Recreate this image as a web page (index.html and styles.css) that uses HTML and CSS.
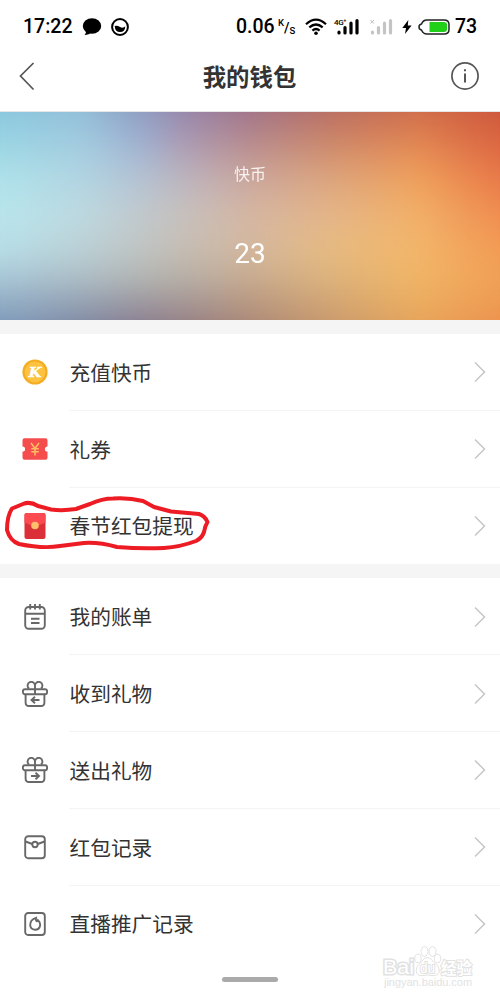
FILE: index.html
```html
<!DOCTYPE html>
<html lang="zh-CN">
<head>
<meta charset="utf-8">
<title>我的钱包</title>
<link rel="stylesheet" href="styles.css">
</head>
<body>
<main class="screen">
  <header class="status">
    <span class="time">17:22</span>
    <svg class="chat" width="20" height="18" viewBox="0 0 20 18"><ellipse cx="10" cy="8" rx="9.2" ry="7.8"/><path d="M4 12Q4.500 15 2.500 17Q7 17 10 14z"/></svg>
    <svg class="face" width="18" height="18" viewBox="0 0 18 18"><circle cx="9" cy="9" r="7.9" fill="none" stroke="#000" stroke-width="2"/><path d="M3.7 8Q6 7 9 9Q12 10.5 14.3 8.5Q14 14 9 14Q4 14 3.7 8z"/></svg>
    <span class="rate">0.06</span>
    <span class="unit"><span class="unit-k">K</span><span class="unit-slash">/</span><span class="unit-s">S</span></span>
    <svg class="wifi" width="22" height="18" viewBox="0 0 22 18"><g fill="none" stroke="#000" stroke-width="2.2"><path d="M1 6.2Q11-3 21 6.2M4.3 9.4Q11 3.6 17.7 9.4M7.4 12.6Q11 9.4 14.6 12.6"/></g><circle cx="11" cy="15.3" r="1.8"/></svg>
    <svg class="signal" width="26" height="18" viewBox="0 0 26 18"><text x="0" y="7">4G⁺</text><g stroke="#000" stroke-width="3.2" stroke-linecap="round"><path d="M5 14.2V15M11 9.6V15M17 5.2V15M23 2.5V15"/></g></svg>
    <svg class="signal-off" width="24" height="18" viewBox="0 0 24 18"><path d="M1.500 2L5 5.500M5 2L1.500 5.500" stroke="#bbb"/><g stroke="#c4c4c4" stroke-width="3.200" stroke-linecap="round"><path d="M3.500 14.200V15M9.500 9.600V15M15.500 5.200V15M21.500 2.500V15"/></g></svg>
    <svg class="bolt" width="10" height="14" viewBox="0 0 10 14"><path d="M6.3 0L.3 8H4L3 14L9.6 5.6H5.8z"/></svg>
    <svg class="battery" width="32" height="16" viewBox="0 0 32 16"><path d="M3.500 5Q5 1 9 1H26Q31 1 31 5.500V10.500Q31 15 26 15H9Q5 15 3.500 11Q1 10.500 1 8T3.500 5z" fill="#fff" stroke="#222" stroke-width="1.500"/><path d="M11.500 3H26Q29 3 29 6V10Q29 13 26 13H11.500z" fill="#20cf18"/></svg>
    <span class="level">73</span>
  </header>

  <nav class="nav">
    <svg class="back" width="18" height="30" viewBox="0 0 18 30"><path d="M15.500 2L2.500 15L15.500 28.500" fill="none" stroke="#555" stroke-width="1.700"/></svg>
    <h1 class="title">我的钱包</h1>
    <svg class="info" width="30" height="30" viewBox="0 0 30 30"><circle cx="15" cy="15" r="13.100" fill="none" stroke="#555" stroke-width="1.700"/><path d="M15 12.500V21.500M15 8.200V10.200" stroke="#555" stroke-width="2"/></svg>
  </nav>

  <section class="balance">
    <div class="tone tone-1"></div>
    <div class="tone tone-2"></div>
    <div class="tone tone-3"></div>
    <div class="tone tone-4"></div>
    <div class="tone tone-5"></div>
    <div class="tone tone-6"></div>
    <div class="soften"></div>
    <div class="coin-label">快币</div>
    <div class="coin-value">23</div>
  </section>

  <section class="group">
    <div class="row">
      <svg class="icon" width="26" height="26" viewBox="0 0 26 26"><circle cx="13" cy="13" r="12.600" fill="#f3ad24"/><circle cx="13" cy="13" r="10.400" fill="#fdc23f"/><text class="coin-k" x="13" y="17.700" textLength="12.500" lengthAdjust="spacingAndGlyphs">K</text></svg>
      <span class="label">充值快币</span>
      <svg class="arrow" width="14" height="22" viewBox="0 0 14 22"><path d="M2 1.500L11.500 11L2 20.500"/></svg>
    </div>
    <div class="row">
      <svg class="icon" width="26" height="26" viewBox="0 0 26 26"><path d="M2.500 2.300H23.500Q25.500 2.300 25.500 4.300V10.400A2.600 2.600 0 0 0 25.500 15.600V21.700Q25.500 23.700 23.500 23.700H2.500Q.5 23.700 .5 21.700V15.600A2.600 2.600 0 0 0 .5 10.400V4.300Q.5 2.300 2.500 2.300z" fill="#f54d4d"/><path d="M9 7L13 12.500L17 7M13 12.500V19.500M9.300 12.700H16.700M9.300 15.700H16.700" fill="none" stroke="#fdbe62" stroke-width="1.500"/></svg>
      <span class="label">礼券</span>
      <svg class="arrow" width="14" height="22" viewBox="0 0 14 22"><path d="M2 1.500L11.500 11L2 20.500"/></svg>
    </div>
    <div class="row">
      <svg class="icon" width="26" height="26" viewBox="0 0 26 26"><rect x="2.500" y="0" width="21" height="26" rx="2" fill="#dc3038"/><path d="M4.500 0H21.500Q23.500 0 23.500 2V9.500Q13 15.500 2.500 9.500V2Q2.500 0 4.500 0z" fill="#fb4b51"/><circle cx="13" cy="12.500" r="3.800" fill="#fdbf6b"/></svg>
      <span class="label">春节红包提现</span>
      <svg class="arrow" width="14" height="22" viewBox="0 0 14 22"><path d="M2 1.500L11.500 11L2 20.500"/></svg>
      <svg class="marker" width="214" height="60" viewBox="0 0 214 60"><path d="M12 15.500L23 11Q30 8 38 13L51 16.500Q63 18 76 16L90 11Q102 5.500 113 5.500Q129 4.500 143 8L154 14L171 18.500L199 21Q205 23 207.500 29Q205 33 204 39Q202 45 196 48Q180 54 164 55Q140 56 117 54Q99 49 84 50L60 53Q43 56 19 51Q10 48 7 37Q7 23 12 15.500z"/></svg>
    </div>
  </section>

  <section class="group">
    <div class="row">
      <svg class="icon line" width="26" height="26" viewBox="0 0 26 26"><rect x="3.200" y="3" width="19.600" height="21.800" rx="3.500"/><path d="M3.200 9.700H22.800M8.200 0V5.500M13 0V5.500M17.800 0V5.500M9 14.800H17.500M9 19H17.500"/></svg>
      <span class="label">我的账单</span>
      <svg class="arrow" width="14" height="22" viewBox="0 0 14 22"><path d="M2 1.500L11.500 11L2 20.500"/></svg>
    </div>
    <div class="row">
      <svg class="icon line" width="26" height="26" viewBox="0 0 26 26"><rect x=".9" y="8.200" width="24.200" height="5" rx="2"/><path d="M3.600 13.200V21.500Q3.600 25 7 25H19Q22.400 25 22.400 21.500V13.200M13 8V4.800A3.700 3.700 0 1 0 7 7.500M13 8V4.800A3.700 3.700 0 1 1 19 7.500M13 8V13M17.500 19H9.500M13 15.800L9.500 19L13 22.200"/></svg>
      <span class="label">收到礼物</span>
      <svg class="arrow" width="14" height="22" viewBox="0 0 14 22"><path d="M2 1.500L11.500 11L2 20.500"/></svg>
    </div>
    <div class="row">
      <svg class="icon line" width="26" height="26" viewBox="0 0 26 26"><rect x=".9" y="8.200" width="24.200" height="5" rx="2"/><path d="M3.600 13.200V21.500Q3.600 25 7 25H19Q22.400 25 22.400 21.500V13.200M13 8V4.800A3.700 3.700 0 1 0 7 7.500M13 8V4.800A3.700 3.700 0 1 1 19 7.500M13 8V13M9 19H17M13.500 15.800L17 19L13.500 22.200"/></svg>
      <span class="label">送出礼物</span>
      <svg class="arrow" width="14" height="22" viewBox="0 0 14 22"><path d="M2 1.500L11.500 11L2 20.500"/></svg>
    </div>
    <div class="row">
      <svg class="icon line" width="26" height="26" viewBox="0 0 26 26"><rect x="3.200" y="2.200" width="19.600" height="22" rx="3"/><circle cx="13" cy="10.500" r="2.700"/><path d="M3.500 7.500L10.300 10M22.500 7.500L15.700 10"/></svg>
      <span class="label">红包记录</span>
      <svg class="arrow" width="14" height="22" viewBox="0 0 14 22"><path d="M2 1.500L11.500 11L2 20.500"/></svg>
    </div>
    <div class="row">
      <svg class="icon line" width="26" height="26" viewBox="0 0 26 26"><rect x="3.200" y="2" width="19.600" height="22" rx="3"/><path d="M14 6.800Q13.500 9.600 14.800 10.200Q15.800 10.300 16 9.300Q18.200 11.300 18.200 14Q17.500 18.700 13 18.700Q8.300 18.300 8.200 14Q8.200 8.500 14 6.800z"/></svg>
      <span class="label">直播推广记录</span>
      <svg class="arrow" width="14" height="22" viewBox="0 0 14 22"><path d="M2 1.500L11.500 11L2 20.500"/></svg>
    </div>
  </section>

  <div class="home-bar"></div>
  <svg class="watermark" width="100" height="48" viewBox="0 0 100 48">
    <text class="wm-latin" x="3" y="29" textLength="31" lengthAdjust="spacingAndGlyphs">Bai</text>
    <g class="paw"><ellipse cx="38" cy="13.500" rx="3.200" ry="4.300"/><ellipse cx="44.500" cy="6.500" rx="3.500" ry="5"/><ellipse cx="52.500" cy="6.500" rx="3.500" ry="5"/><ellipse cx="57.500" cy="13.500" rx="3.200" ry="4.300"/><path d="M47.500 12.500Q51 12.500 53.500 17Q59.500 21 59.500 26Q58 31.500 52 30.500Q47.500 29.500 43 30.500Q37 31.500 36 26Q36 21 41.500 17Q44 12.500 47.500 12.500z"/></g>
    <text class="wm-du" x="40" y="28" textLength="15" lengthAdjust="spacingAndGlyphs">du</text>
    <text class="wm-cn" x="61" y="28.500">经验</text>
    <text class="wm-url" x="4" y="41" textLength="88" lengthAdjust="spacingAndGlyphs">jingyan.baidu.com</text>
  </svg>
</main>
</body>
</html>
```
FILE: styles.css
```css
* { box-sizing: border-box; }

body {
  margin: 0;
  background: #fff;
  font-family: Roboto, "Noto Sans CJK SC", sans-serif;
  color: #333;
}

.screen {
  position: relative;
  width: 500px;
  height: 1000px;
  overflow: hidden;
}

svg { display: block; flex: none; }

.status {
  display: flex;
  align-items: center;
  height: 53px;
  padding: 0 0 0 23px;
  color: #000;
  font-size: 19.5px;
  font-weight: 500;
  line-height: 24px;
  white-space: nowrap;
}

.time { width: 59px; }
.face { margin-left: 9px; }
.rate { width: 41px; margin-left: 107px; }
.unit { display: flex; width: 19px; height: 20px; line-height: 12px; margin-left: 1px; }
.unit-k { font-size: 9.5px; }
.unit-slash { font-size: 14px; padding-top: 5px; }
.unit-s { font-size: 9.5px; padding-top: 8px; }
.wifi { margin-left: 8px; }
.signal { margin-left: 7px; }
.signal text { font: 500 8px Roboto, sans-serif; letter-spacing: -.4px; }
.signal-off { margin-left: 9px; }
.bolt { margin-left: 9px; }
.battery { margin-left: 6px; }
.level { margin-left: 5px; }

.nav {
  display: flex;
  align-items: center;
  justify-content: space-between;
  height: 59px;
  padding: 0 20px 12px 18px;
  border-bottom: 1px solid #e7e5e5;
}

.title {
  margin: 4px 0 0 13px;
  font-size: 23.4px;
  font-weight: 700;
  line-height: 32px;
}

.balance {
  position: relative;
  display: flex;
  flex-direction: column;
  align-items: center;
  height: 208px;
  padding-top: 51px;
  color: #fff;
  overflow: hidden;
}

/* Colour bands that fade into one another from top to bottom. */
.tone { position: absolute; inset: 0; }
.tone-1 { background: linear-gradient(90deg, #8bc8df, #92bed9 83px, #8e9dc3 140px, #9784a8 190px, #a17389 250px, #b96e62 333px, #cf6d4c 417px, #cd583b); }
.tone-2 {
  background: linear-gradient(90deg, #9dd7e4, #a5cde0 83px, #a3b4d2 140px, #b09cb1 190px, #bb908f 250px, #d08c6c 333px, #e58b54 417px, #dd6843);
  mask-image: linear-gradient(transparent 0, #000 35px);
}
.tone-3 {
  background: linear-gradient(90deg, #b0e3ea, #b3d5e2 83px, #b5c4d3 140px, #bfb5bc 190px, #cca99f 250px, #dea77e 333px, #f0a35d 417px, #e97b4a);
  mask-image: linear-gradient(transparent 35px, #000 70px);
}
.tone-4 {
  background: linear-gradient(90deg, #b9e5ed, #bed9e0 83px, #c2c9cd 140px, #c9c0bb 190px, #d6b7a2 250px, #e5b688 333px, #f2b169 417px, #f08e50);
  mask-image: linear-gradient(transparent 70px, #000 105px);
}
.tone-5 {
  background: linear-gradient(90deg, #b7dde7, #bbcfd4 83px, #bfc4c2 140px, #c6bcb0 190px, #d3b79e 250px, #e7bb80 333px, #f3b66a 417px, #f29c55);
  mask-image: linear-gradient(transparent 105px, #000 140px);
}
.tone-6 {
  background: linear-gradient(90deg, #a2bed1, #a7b6c0 83px, #adaead 140px, #b3a9a1 190px, #c3a68b 250px, #dab07a 333px, #efb465 417px, #f0a056);
  mask-image: linear-gradient(transparent 140px, #000 175px);
}
.tone-6::after {
  content: "";
  position: absolute;
  inset: 0;
  background: linear-gradient(90deg, #7e9bba, #8088a2 83px, #897d90 140px, #967f83 190px, #ab8777 250px, #c9996c 333px, #e6a45b 417px, #ed924e);
  mask-image: linear-gradient(transparent 175px, #000 208px);
}
.soften { position: absolute; inset: 0; backdrop-filter: blur(12px); }

.coin-label, .coin-value { position: relative; }
.coin-label { font-size: 16px; line-height: 24px; opacity: .85; }
.coin-value { margin-top: 50px; font-size: 28px; line-height: 34px; }

.group { border-top: 14px solid #f5f5f5; }

.row {
  position: relative;
  display: grid;
  grid-template-columns: 26px 1fr 14px;
  column-gap: 22px;
  align-items: center;
  height: 76.8px;
  padding: 0 13px 0 21.5px;
  background: linear-gradient(#f4f4f4, #f4f4f4) 69px 100% / 431px 1px no-repeat;
}
.row:last-child { background: none; }

.label { padding-top: 3px; font-size: 20.7px; line-height: 30px; white-space: nowrap; }
.arrow { fill: none; stroke: #c6c6c6; stroke-width: 1.5; }
.line { fill: none; stroke: #686868; stroke-width: 1.9; }
.coin-k { font: italic 700 13px "DejaVu Serif", serif; fill: #fff; stroke: #fff; stroke-width: .5; text-anchor: middle; }

.marker {
  position: absolute;
  left: 0;
  top: 5px;
  fill: none;
  stroke: #ed1c24;
  stroke-width: 4;
  stroke-linejoin: round;
}

.home-bar {
  position: absolute;
  left: 222px;
  top: 977px;
  width: 56px;
  height: 5px;
  border-radius: 3px;
  background: #aaa;
}

.watermark {
  position: absolute;
  left: 380px;
  top: 945px;
  fill: #fff;
  stroke: #e2e2e2;
  stroke-width: 1;
  font-family: "Liberation Sans", "Noto Sans CJK SC", sans-serif;
}
.wm-latin { font-size: 20px; font-weight: 400; stroke-width: 3; paint-order: stroke; }
.wm-du { font-size: 14px; font-weight: 400; stroke-width: 2; paint-order: stroke; }
.wm-cn { font-size: 15.5px; font-weight: 700; stroke-width: 2; paint-order: stroke; }
.wm-url { font-size: 10.5px; stroke: none; fill: #e2e2e2; }
```
